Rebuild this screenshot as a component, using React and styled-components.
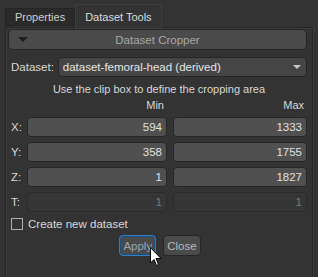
import React, { useState } from 'react';
import styled, { createGlobalStyle } from 'styled-components';

const Global = createGlobalStyle`
  html, body {
    margin: 0;
    background: #333333;
    font-family: "Liberation Sans", Arial, sans-serif;
    font-size: 11px;
    color: #d8d8d8;
  }
`;

const Page = styled.div`
  width: 318px;
  height: 277px;
  padding: 4px 5px 0 5px;
  box-sizing: border-box;
  display: flex;
  flex-direction: column;
  overflow: hidden;
`;

const TabBar = styled.div`
  display: flex;
  align-items: flex-end;
  height: 23px;
`;

const Tab = styled.div`
  box-sizing: border-box;
  height: ${p => (p.active ? '24px' : '18px')};
  margin-bottom: ${p => (p.active ? '-1px' : '1px')};
  padding: 0 ${p => (p.active ? '9px' : '9px')};
  display: flex;
  align-items: center;
  font-size: 11px;
  background: ${p => (p.active ? '#333333' : '#2a2a2a')};
  border: 1px solid ${p => (p.active ? '#3e3e3e' : '#242424')};
  border-bottom: ${p => (p.active ? 'none' : '1px solid #242424')};
  color: ${p => (p.active ? '#dcdcdc' : '#cfcfcf')};
  position: relative;
  z-index: ${p => (p.active ? 1 : 0)};
`;

const Panel = styled.div`
  flex: 1;
  border: 1px solid #262626;
  border-bottom: none;
  box-shadow: inset 1px 1px 0 #3c3c3c, 1px 0 0 #3e3e3e;
  padding: 1px 5px 0 2px;
  display: flex;
  flex-direction: column;
`;

const Header = styled.div`
  height: 21px;
  box-sizing: border-box;
  border: 1px solid #262626;
  border-radius: 5px;
  background: #4a4a4a;
  display: flex;
  align-items: center;
  position: relative;
  color: #a8a8a8;
  justify-content: center;
  font-size: 11.5px;
`;

const Arrow = styled.span`
  position: absolute;
  left: 9px;
  top: 7px;
  width: 0;
  height: 0;
  border-left: 5px solid transparent;
  border-right: 5px solid transparent;
  border-top: 5px solid #1e1e1e;
`;

const Body = styled.div`
  padding: 7px 0 0 3px;
  display: flex;
  flex-direction: column;
`;

const DatasetRow = styled.div`
  display: flex;
  align-items: center;
  gap: 4px;
`;

const Label = styled.span`
  color: #d8d8d8;
  font-size: 11.5px;
`;

const Combo = styled.div`
  flex: 1;
  height: 20px;
  box-sizing: border-box;
  border: 1px solid #262626;
  border-radius: 4px;
  background: #454545;
  display: flex;
  align-items: center;
  padding: 0 5px 0 4px;
  color: #e6e6e6;
  font-size: 11.5px;
  justify-content: space-between;
`;

const ComboArrow = styled.span`
  width: 0;
  height: 0;
  border-left: 4px solid transparent;
  border-right: 4px solid transparent;
  border-top: 4px solid #c8c8c8;
`;

const Hint = styled.div`
  text-align: center;
  margin-top: 4px;
  height: 16px;
  line-height: 16px;
`;

const Grid = styled.div`
  display: grid;
  grid-template-columns: 16px 1fr 1fr;
  row-gap: 5px;
  align-items: center;
`;

const ColHead = styled.div`
  text-align: right;
  padding-right: 3px;
  height: 16px;
  line-height: 16px;
  margin-bottom: -1px;
`;

const Field = styled.div`
  height: 20px;
  box-sizing: border-box;
  margin-left: ${p => (p.second ? '6px' : '0')};
  border: 1px solid ${p => (p.disabled ? '#2a2a2a' : '#262626')};
  border-radius: 4px;
  background: ${p => (p.disabled ? '#363636' : '#505050')};
  color: ${p => (p.disabled ? '#7a7a7a' : '#e0e0e0')};
  font-size: 11.5px;
  text-align: right;
  padding-right: 4px;
  line-height: 18px;
`;

const CheckRow = styled.label`
  display: flex;
  align-items: center;
  gap: 5px;
  margin-top: 6px;
  font-size: 11.5px;
`;

const Box = styled.span`
  width: 10px;
  height: 10px;
  border: 1px solid #b0b0b0;
  background: #333;
`;

const Buttons = styled.div`
  display: flex;
  justify-content: center;
  gap: 7px;
  margin-top: 5px;
  padding-left: 2px;
  position: relative;
`;

const Button = styled.button`
  height: 21px;
  box-sizing: border-box;
  padding: 0 3px;
  font-family: inherit;
  font-size: 11.5px;
  border-radius: 4px;
  background: #4a4a4a;
  color: ${p => (p.focused ? '#98a6b4' : '#b8b8b8')};
  border: 1px solid ${p => (p.focused ? '#2f7fc8' : '#262626')};
  box-shadow: ${p => (p.focused ? 'inset 0 0 0 1px #1c4f80' : 'none')};
`;

const Cursor = styled.svg`
  position: absolute;
  left: 139px;
  top: 12px;
`;

const rows = [
  ['X:', 594, 1333],
  ['Y:', 358, 1755],
  ['Z:', 1, 1827],
];

export default function App() {
  const [checked, setChecked] = useState(false);
  return (
    <Page>
      <Global />
      <TabBar>
        <Tab>Properties</Tab>
        <Tab active>Dataset Tools</Tab>
      </TabBar>
      <Panel>
        <Header>
          <Arrow />
          Dataset Cropper
        </Header>
        <Body>
          <DatasetRow>
            <Label>Dataset:</Label>
            <Combo>
              dataset-femoral-head (derived)
              <ComboArrow />
            </Combo>
          </DatasetRow>
          <Hint>Use the clip box to define the cropping area</Hint>
          <Grid>
            <span />
            <ColHead>Min</ColHead>
            <ColHead>Max</ColHead>
            {rows.map(([l, a, b]) => (
              <React.Fragment key={l}>
                <Label>{l}</Label>
                <Field>{a}</Field>
                <Field second>{b}</Field>
              </React.Fragment>
            ))}
            <Label>T:</Label>
            <Field disabled>1</Field>
            <Field disabled second>1</Field>
          </Grid>
          <CheckRow onClick={() => setChecked(!checked)}>
            <Box />
            Create new dataset
          </CheckRow>
          <Buttons>
            <Button focused>Apply</Button>
            <Button>Close</Button>
            <Cursor width="12" height="20" viewBox="0 0 12 20">
              <path d="M0.5 0.5 L0.5 16 L4 12.5 L6.5 18.5 L8.5 17.5 L6 11.5 L11 11.5 Z" fill="#fff" stroke="#000" strokeWidth="1" />
            </Cursor>
          </Buttons>
        </Body>
      </Panel>
    </Page>
  );
}
